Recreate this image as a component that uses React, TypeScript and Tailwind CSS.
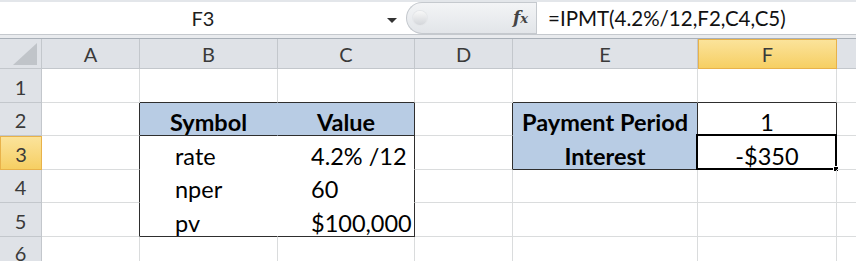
import React from "react";

const cols = ["A", "B", "C", "D", "E", "F", ""];
const colWidths = "42px 98px 138px 137px 98px 185px 139px 1fr";
const rowHeights = [34, 33, 34, 33, 34, 30];

const GRID = "#dadcdd";
const DARK = "#2e2e2e";
const BLUE = "#b8cce4";

type Cell = { text?: string; bold?: boolean; align?: "left" | "center"; fill?: string };

const cells: Record<string, Cell> = {
  "2-2": { text: "Symbol", bold: true, align: "center", fill: BLUE },
  "2-3": { text: "Value", bold: true, align: "center", fill: BLUE },
  "3-2": { text: "rate" },
  "3-3": { text: "4.2% /12" },
  "4-2": { text: "nper" },
  "4-3": { text: "60" },
  "5-2": { text: "pv" },
  "5-3": { text: "$100,000" },
  "2-5": { text: "Payment Period", bold: true, align: "center", fill: BLUE },
  "3-5": { text: "Interest", bold: true, align: "center", fill: BLUE },
  "2-6": { text: "1", align: "center", fill: "#ffffff" },
  "3-6": { text: "-$350", align: "center", fill: "#ffffff" },
};

function inRange(n: number, a: number, b: number) {
  return n >= a && n <= b;
}

function rightColor(r: number, c: number, fill?: string) {
  if (c === 1 && inRange(r, 2, 5)) return DARK;
  if (c === 3 && inRange(r, 2, 5)) return DARK;
  if (c === 2 && inRange(r, 2, 5)) return fill ?? "#ffffff";
  if ((c === 4 || c === 5 || c === 6) && inRange(r, 2, 3)) return DARK;
  return GRID;
}

function bottomColor(r: number, c: number, fill?: string) {
  if (inRange(c, 2, 3) && (r === 1 || r === 2 || r === 5)) return DARK;
  if (inRange(c, 2, 3) && inRange(r, 3, 4)) return "#ffffff";
  if (inRange(c, 5, 6) && (r === 1 || r === 3)) return DARK;
  if (c === 6 && r === 2) return DARK;
  if (c === 5 && r === 2) return fill ?? BLUE;
  return GRID;
}

function FormulaBar() {
  return (
    <div className="flex h-[35px] border-t-2 border-b border-t-[#e3e6ea] border-b-[#c5c9ce] bg-white">
      <div className="relative flex w-[406px] items-center justify-center">
        <span className="text-[20px] text-[#1e1e1e]">F3</span>
        <span className="absolute right-[9px] top-[16px] h-0 w-0 border-x-[5px] border-t-[5px] border-x-transparent border-t-[#333]" />
      </div>
      <div className="flex w-[130px] items-center rounded-l-full border border-r-0 border-[#c5c9ce] bg-gradient-to-b from-[#f3f4f6] to-[#e2e5e9] pl-[6px] pr-[8px]">
        <span className="h-[14px] w-[14px] rounded-full bg-gradient-to-b from-[#f8f8f8] to-[#d3d6da] shadow-[0_0_0_1px_#e4e6e9]" />
        <span className="ml-auto font-['DejaVu_Serif'] text-[17px] font-bold italic text-[#444]">
          f<span className="text-[13px]">x</span>
        </span>
      </div>
      <div className="flex flex-1 items-center border-l border-[#c5c9ce] pl-[11px]">
        <span className="text-[20.5px] text-[#111]">=IPMT(4.2%/12,F2,C4,C5)</span>
      </div>
    </div>
  );
}

export default function App() {
  return (
    <div className="h-[261px] w-[856px] overflow-hidden bg-white font-['Lato','Liberation_Sans',sans-serif]">
      <FormulaBar />
      <div className="h-[4px] border-b border-[#a9b0b8] bg-[#e9ebee]" />
      <div className="grid" style={{ gridTemplateColumns: colWidths }}>
        {/* header row */}
        <div className="relative h-[30px] border-r border-b border-[#c3c7cc] bg-[#dfe2e7]">
          <svg className="absolute bottom-[3px] right-[4px]" width="24" height="22" viewBox="0 0 24 22">
            <polygon points="24,0 24,22 0,22" fill="#c0c4c9" />
          </svg>
        </div>
        {cols.map((c, i) => (
          <div
            key={i}
            className={
              c === "F"
                ? "flex h-[30px] items-center justify-center border border-[#e8b24a] bg-gradient-to-b from-[#fbe39a] to-[#f6cf62] text-[20px] text-[#3a3a3a]"
                : "flex h-[30px] items-center justify-center border-r border-b border-[#c3c7cc] bg-[#dfe2e7] text-[20px] text-[#3a3a3a]"
            }
          >
            {c}
          </div>
        ))}
        {rowHeights.map((h, ri) => {
          const r = ri + 1;
          return (
            <React.Fragment key={r}>
              <div
                className={
                  r === 3
                    ? "flex items-center justify-center border border-[#e8b24a] bg-gradient-to-b from-[#fbe39a] to-[#f6cf62] pt-[2px] text-[20px] text-[#3a3a3a]"
                    : "flex items-center justify-center border-r border-b border-[#c3c7cc] bg-[#dfe2e7] pt-[2px] text-[20px] text-[#3a3a3a]"
                }
                style={{ height: h }}
              >
                {r}
              </div>
              {cols.map((_, ci) => {
                const c = ci + 1;
                const cell = cells[`${r}-${c}`];
                const fill = cell?.fill ?? (inRange(c, 2, 3) && inRange(r, 3, 5) ? "#ffffff" : undefined);
                return (
                  <div
                    key={c}
                    className={`relative flex items-end border-r border-b text-[23.5px] leading-[26px] text-black ${
                      cell?.align === "center" ? "justify-center" : "pl-[34px]"
                    } ${cell?.bold ? "font-bold" : ""}`}
                    style={{
                      height: h,
                      backgroundColor: fill,
                      borderRightColor: rightColor(r, c, fill),
                      borderBottomColor: bottomColor(r, c, fill),
                    }}
                  >
                    {cell?.text && (
                      <span className={cell.align === "center" ? "" : c === 3 ? "-ml-[1px]" : "ml-[1px]"}>
                        {cell.text}
                      </span>
                    )}
                    {r === 3 && c === 6 && (
                      <div className="absolute -left-[2px] -top-[2px] h-[36px] w-[141px] border-2 border-black">
                        <div className="absolute -bottom-[4px] -right-[4px] h-[6px] w-[6px] border border-white bg-black" />
                      </div>
                    )}
                  </div>
                );
              })}
            </React.Fragment>
          );
        })}
      </div>
    </div>
  );
}
